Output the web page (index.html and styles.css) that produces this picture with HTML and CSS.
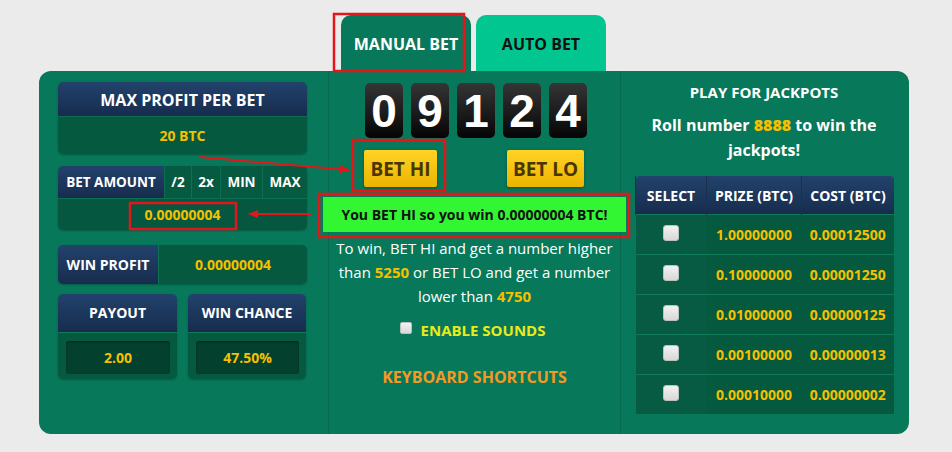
FILE: index.html
```html
<!DOCTYPE html>
<html lang="en">
<head>
    <meta charset="UTF-8">
    <meta name="viewport" content="width=device-width, initial-scale=1.0">
    <title>Dice - Manual Bet</title>
    <link rel="stylesheet" href="styles.css">
</head>
<body>
    <div class="page">
        <div class="tabs">
            <div class="tab tab-manual">MANUAL BET</div>
            <div class="tab tab-auto">AUTO BET</div>
        </div>

        <div class="panel">
            <div class="col col-left">
                <div class="box">
                    <div class="box-head">MAX PROFIT PER BET</div>
                    <div class="box-value">20 BTC</div>
                </div>

                <div class="box bet-box">
                    <div class="bet-row">
                        <div class="bet-label">BET AMOUNT</div>
                        <div class="bet-btn w-half">/2</div>
                        <div class="bet-btn w-double">2x</div>
                        <div class="bet-btn w-min">MIN</div>
                        <div class="bet-btn w-max">MAX</div>
                    </div>
                    <div class="bet-input">0.00000004</div>
                </div>

                <div class="box win-profit">
                    <div class="wp-label">WIN PROFIT</div>
                    <div class="wp-value">0.00000004</div>
                </div>

                <div class="pair">
                    <div class="box">
                        <div class="pair-head">PAYOUT</div>
                        <div class="pair-body"><div class="pair-field">2.00</div></div>
                    </div>
                    <div class="box">
                        <div class="pair-head">WIN CHANCE</div>
                        <div class="pair-body"><div class="pair-field">47.50%</div></div>
                    </div>
                </div>
            </div>

            <div class="col col-mid">
                <div class="digits">
                    <div class="digit">0</div>
                    <div class="digit">9</div>
                    <div class="digit">1</div>
                    <div class="digit">2</div>
                    <div class="digit">4</div>
                </div>
                <div class="bet-buttons">
                    <button class="big-btn btn-hi">BET HI</button>
                    <button class="big-btn btn-lo">BET LO</button>
                </div>
                <div class="result">You BET HI so you win 0.00000004 BTC!</div>
                <p class="rules">To win, BET HI and get a number higher than <b>5250</b> or BET LO and get a number lower than <b>4750</b></p>
                <label class="sounds"><span class="check small"></span>ENABLE SOUNDS</label>
                <div class="shortcuts">KEYBOARD SHORTCUTS</div>
            </div>

            <div class="col col-right">
                <div class="jp-title">PLAY FOR JACKPOTS</div>
                <div class="jp-text">Roll number <b>8888</b> to win the jackpots!</div>
                <table class="jp-table">
                    <thead>
                        <tr><th class="c-sel">SELECT</th><th>PRIZE (BTC)</th><th>COST (BTC)</th></tr>
                    </thead>
                    <tbody>
                        <tr><td class="c-sel"><span class="check"></span></td><td>1.00000000</td><td>0.00012500</td></tr>
                        <tr><td class="c-sel"><span class="check"></span></td><td>0.10000000</td><td>0.00001250</td></tr>
                        <tr><td class="c-sel"><span class="check"></span></td><td>0.01000000</td><td>0.00000125</td></tr>
                        <tr><td class="c-sel"><span class="check"></span></td><td>0.00100000</td><td>0.00000013</td></tr>
                        <tr><td class="c-sel"><span class="check"></span></td><td>0.00010000</td><td>0.00000002</td></tr>
                    </tbody>
                </table>
            </div>
        </div>

        <!-- annotation marks drawn over the screenshot -->
        <svg class="marks" width="952" height="452" viewBox="0 0 952 452">
            <defs>
                <marker id="head" markerWidth="10" markerHeight="8" refX="9" refY="4" orient="auto" markerUnits="userSpaceOnUse">
                    <path d="M0,0 L10,4 L0,8 Z" fill="#e3171b"/>
                </marker>
            </defs>
            <g fill="none" stroke="#e3171b" stroke-width="2.5">
                <rect x="334" y="14" width="130" height="57"/>
                <rect x="130" y="203" width="106" height="26"/>
                <rect x="353" y="140" width="92" height="51"/>
                <rect x="319" y="194" width="310" height="43"/>
            </g>
            <g stroke="#e3171b" stroke-width="2">
                <line x1="200" y1="157" x2="349" y2="170" marker-end="url(#head)"/>
                <line x1="311" y1="214" x2="249" y2="214" marker-end="url(#head)"/>
            </g>
        </svg>
    </div>
</body>
</html>
```

FILE: styles.css
```css
body, html {
    margin: 0;
    padding: 0;
    background: #ebebeb;
    font-family: "Open Sans", Arial, sans-serif;
}

.page {
    position: relative;
    width: 952px;
    height: 452px;
}

.tabs {
    display: flex;
    gap: 5px;
    padding: 15px 0 0 341px;
}

.tab {
    width: 130px;
    height: 56px;
    border-radius: 10px 10px 0 0;
    font-weight: bold;
    font-size: 16px;
    text-align: center;
    line-height: 58px;
}

.tab-manual {
    background: #08785a;
    color: #fff;
}

.tab-auto {
    background: #02c68f;
    color: #111;
}

.panel {
    margin-left: 39px;
    width: 870px;
    height: 363px;
    background: #08785a;
    border-radius: 12px;
    display: flex;
    color: #fff;
}

.col {
    box-sizing: border-box;
}

.col-left {
    width: 290px;
    padding: 11px 21px 0 19px;
    border-right: 1px solid rgba(0, 0, 0, 0.12);
}

.col-mid {
    width: 292px;
    padding-top: 12px;
    border-right: 1px solid rgba(0, 0, 0, 0.12);
    text-align: center;
}

.col-right {
    width: 288px;
    padding: 10px 16px 0 14px;
    text-align: center;
}

/* left column boxes */
.box {
    border-radius: 5px;
    overflow: hidden;
    box-shadow: 0 1px 2px rgba(0, 0, 0, 0.25);
}

.box-head, .bet-label, .wp-label, .pair-head {
    background: linear-gradient(#22426c, #172c4d);
    color: #fff;
    font-weight: bold;
    text-align: center;
}

.box-head {
    height: 34px;
    line-height: 36px;
    font-size: 16px;
}

.box-value {
    height: 37px;
    line-height: 37px;
    background: #05593f;
    border-top: 1px solid #0b6e50;
    color: #f5c000;
    font-weight: bold;
    font-size: 14px;
    text-align: center;
}

.bet-box {
    margin-top: 12px;
}

.bet-row {
    display: flex;
    height: 32px;
    line-height: 33px;
    font-size: 13.5px;
    font-weight: bold;
}

.bet-label {
    width: 106px;
}

.bet-btn {
    background: #055a41;
    border-left: 1px solid #0c7052;
    text-align: center;
}

.w-half { width: 26px; }
.w-double { width: 28px; }
.w-min { width: 41px; }
.w-max { flex: 1; }

.bet-input {
    height: 31px;
    line-height: 31px;
    background: #05583f;
    border-top: 1px solid #0c7052;
    color: #f5c000;
    font-size: 14px;
    font-weight: bold;
    text-align: center;
}

.win-profit {
    margin-top: 15px;
    display: flex;
    height: 39px;
    line-height: 40px;
    font-weight: bold;
}

.wp-label {
    width: 100px;
    font-size: 14px;
}

.wp-value {
    flex: 1;
    background: #05593f;
    border-left: 1px solid #0c7052;
    color: #f5c000;
    font-size: 14px;
    text-align: center;
}

.pair {
    margin-top: 10px;
    display: grid;
    grid-template-columns: 119px 118px;
    gap: 11px;
}

.pair-head {
    height: 38px;
    line-height: 38px;
    font-size: 14px;
    border-bottom: 1px solid #127a5c;
}

.pair-body {
    background: #05593f;
    padding: 8px 7px 5px 8px;
    height: 33px;
}

.pair-field {
    height: 33px;
    line-height: 33px;
    background: #03402d;
    border-radius: 3px;
    box-shadow: inset 0 1px 2px rgba(0, 0, 0, 0.4);
    color: #f5c000;
    font-size: 14px;
    font-weight: bold;
    text-align: center;
}

/* middle column */
.digits {
    display: flex;
    justify-content: center;
    gap: 8px;
    padding-left: 3px;
}

.digit {
    width: 38px;
    height: 55px;
    border-radius: 5px;
    background: linear-gradient(#353535, #050505);
    font-family: "Liberation Sans", Arial, sans-serif;
    font-weight: bold;
    font-size: 46px;
    line-height: 57px;
    color: #fff;
}

.bet-buttons {
    margin-top: 12px;
    display: flex;
    justify-content: space-between;
    padding: 0 36px 0 35px;
}

.big-btn {
    height: 37px;
    border: none;
    border-radius: 2px;
    background: linear-gradient(#ffd424, #eab400);
    box-shadow: 0 1px 3px rgba(0, 0, 0, 0.35);
    color: #4b3500;
    font-family: "Open Sans", Arial, sans-serif;
    font-weight: bold;
    font-size: 19px;
    padding: 0;
}

.btn-hi { width: 73px; }
.btn-lo { width: 77px; }

.result {
    margin: 10px -6px 0 -6px;
    height: 35px;
    line-height: 35px;
    background: #33f633;
    color: #111;
    font-weight: bold;
    font-size: 14px;
}

.rules {
    margin: 4px 0 0;
    font-size: 15px;
    line-height: 24px;
}

.rules b {
    color: #f5c000;
}

.sounds {
    display: flex;
    align-items: center;
    justify-content: center;
    gap: 9px;
    margin-top: 12px;
    height: 20px;
    color: #eaea1a;
    font-weight: bold;
    font-size: 15px;
    padding-right: 4px;
}

.check {
    display: inline-block;
    width: 16px;
    height: 16px;
    border-radius: 3px;
    background: linear-gradient(#f2f2f2, #d8d8d8);
    border: 1px solid #b9c4bf;
    box-sizing: border-box;
    vertical-align: middle;
}

.check.small {
    width: 12px;
    height: 12px;
    border-radius: 2px;
    margin-top: -4px;
}

.shortcuts {
    margin-top: 26px;
    color: #f39a22;
    font-weight: bold;
    font-size: 16px;
}

/* right column */
.jp-title {
    line-height: 22px;
    font-weight: bold;
    font-size: 15px;
}

.jp-text {
    margin-top: 10px;
    line-height: 25px;
    font-weight: bold;
    font-size: 16px;
    padding: 0 8px;
}

.jp-text b {
    color: #f5c000;
}

.jp-table {
    margin-top: 13px;
    width: 259px;
    border-collapse: collapse;
    font-size: 14px;
    font-weight: bold;
}

.jp-table th {
    height: 38px;
    padding: 0;
    background: linear-gradient(#22426c, #172c4d);
    border-left: 1px solid #1a3050;
    color: #fff;
}

.jp-table th:first-child {
    border-radius: 4px 0 0 0;
}

.jp-table th:last-child {
    border-radius: 0 4px 0 0;
}

.jp-table td {
    height: 39px;
    padding: 0;
    background: #05593f;
    border-top: 1px solid #127a5c;
    color: #f5c000;
    text-align: center;
}

.jp-table td.c-sel {
    width: 71px;
    background: #065b42;
    padding-bottom: 6px;
    box-sizing: border-box;
}

.jp-table th:nth-child(2), .jp-table td:nth-child(2) {
    width: 94px;
}

.marks {
    position: absolute;
    top: 0;
    left: 0;
    pointer-events: none;
}
```
